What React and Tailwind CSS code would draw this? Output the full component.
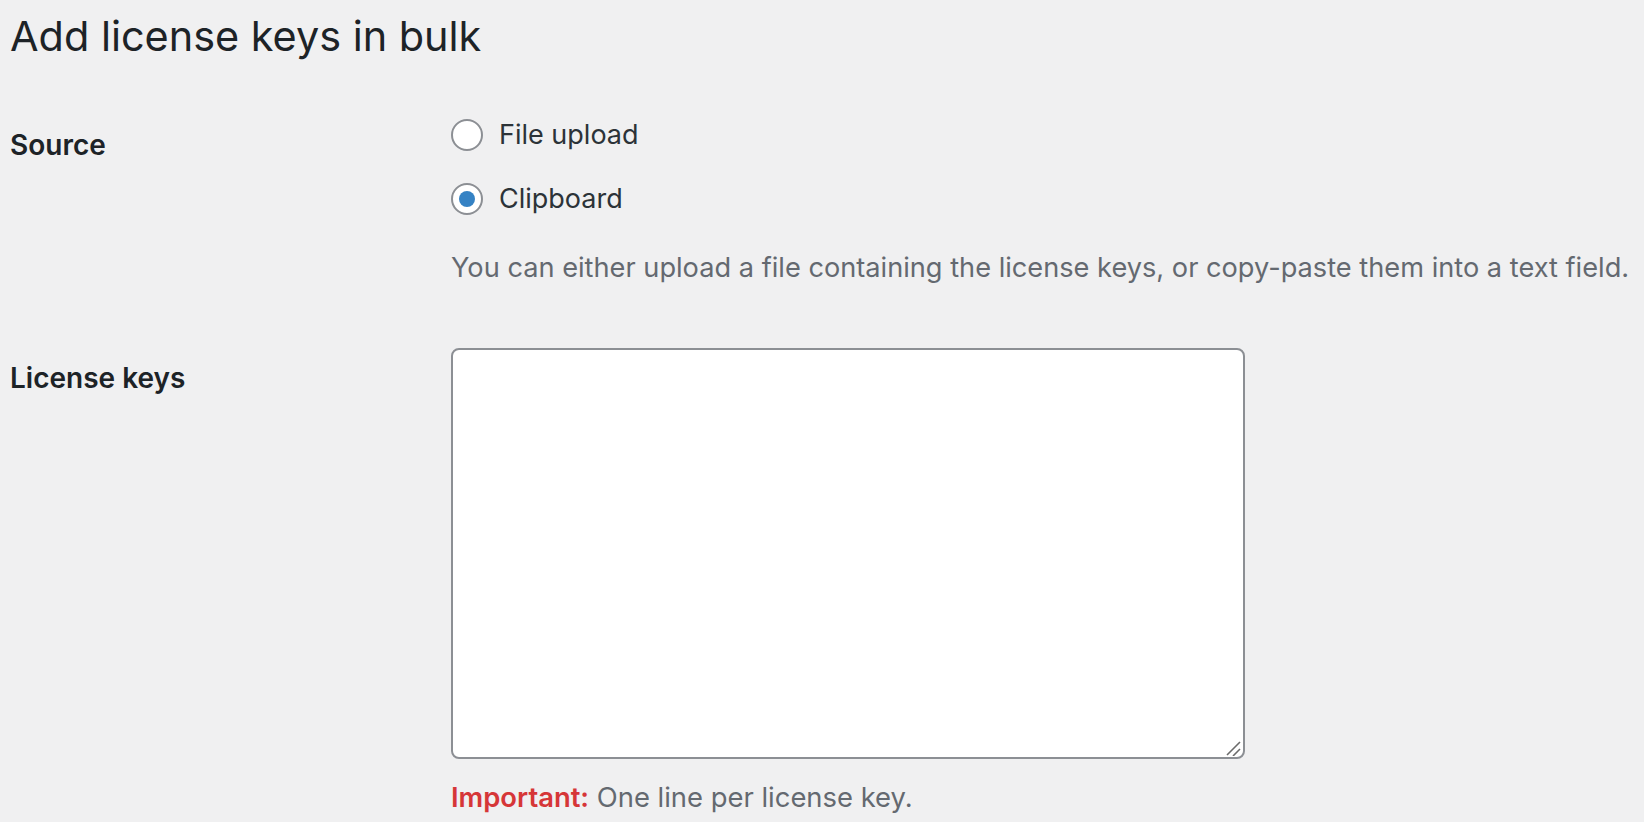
import React, { useState } from "react";

const Radio = ({ checked, label, onChange }) => (
  <label className="flex items-center h-[40px] cursor-pointer" onClick={onChange}>
    <span className="w-[32px] h-[32px] rounded-full border-2 border-[#8c8f94] bg-white flex items-center justify-center shrink-0">
      {checked && <span className="w-[16px] h-[16px] rounded-full bg-[#3582c4]" />}
    </span>
    <span className="ml-[16px] text-[27px] leading-[36px] text-[#2c3338]">{label}</span>
  </label>
);

export default function App() {
  const [source, setSource] = useState("clipboard");

  return (
    <div className="min-h-screen bg-[#f0f0f1] pt-[7px] px-[10px] font-['Inter','Liberation_Sans',sans-serif]">
      <h1 className="text-[41.4px] leading-[58px] text-[#1d2327] font-normal">Add license keys in bulk</h1>

      <div className="grid grid-cols-[441px_1fr] mt-[48px]">
        {/* Source */}
        <div className="pt-[14px] text-[28px] leading-[36px] font-semibold text-[#1d2327]">Source</div>
        <div className="flex flex-col">
          <div className="mt-[2px]">
            <Radio label="File upload" checked={source === "file"} onChange={() => setSource("file")} />
          </div>
          <div className="mt-[24px]">
            <Radio label="Clipboard" checked={source === "clipboard"} onChange={() => setSource("clipboard")} />
          </div>
          <p className="mt-[31px] text-[27.2px] leading-[36px] text-[#646970]">
            You can either upload a file containing the license keys, or copy-paste them into a text field.
          </p>
        </div>

        {/* License keys */}
        <div className="mt-[62px] pt-[12px] text-[28px] leading-[36px] font-semibold text-[#1d2327]">License keys</div>
        <div className="mt-[62px] flex flex-col">
          <div className="relative w-[794px] h-[411px]">
            <textarea className="w-full h-full block bg-white border-2 border-[#8c8f94] rounded-[8px] outline-none p-3 text-[27px] resize-none" />
            {/* resize grip */}
            <svg className="absolute right-[4px] bottom-[3px] pointer-events-none" width="15" height="15" viewBox="0 0 15 15">
              <line x1="14" y1="1" x2="1" y2="14" stroke="#6b6b6b" strokeWidth="1.6" />
              <line x1="14" y1="8" x2="7" y2="15" stroke="#6b6b6b" strokeWidth="1.6" />
            </svg>
          </div>
          <p className="mt-[20px] text-[27.4px] leading-[36px] text-[#646970]">
            <strong className="font-semibold text-[#d63638]">Important:</strong> One line per license key.
          </p>
        </div>
      </div>
    </div>
  );
}
